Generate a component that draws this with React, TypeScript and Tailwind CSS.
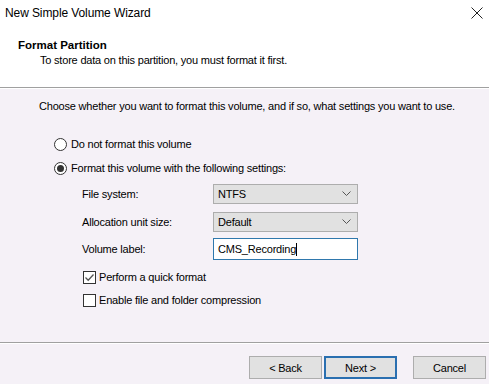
import React from 'react';

const font = { fontFamily: "'Liberation Sans', Arial, sans-serif" };

const Radio = ({ checked, label }: { checked?: boolean; label: string }) => (
  <div className="flex items-center h-[16px] pl-[54px] gap-[4px]">
    <span className="w-[13px] h-[13px] rounded-full border border-[#333] bg-white flex items-center justify-center shrink-0">
      {checked && <span className="w-[7px] h-[7px] rounded-full bg-[#333]" />}
    </span>
    <span>{label}</span>
  </div>
);

const Check = ({ checked, label }: { checked?: boolean; label: string }) => (
  <div className="flex items-center h-[16px] pl-[83px] gap-[3px]">
    <span className="w-[13px] h-[13px] border border-[#333] bg-white flex items-center justify-center shrink-0">
      {checked && (
        <svg width="11" height="11" viewBox="0 0 11 11">
          <path d="M1.5 5.5 L4.2 8.2 L9.5 2.5" fill="none" stroke="#555" strokeWidth="1.3" />
        </svg>
      )}
    </span>
    <span>{label}</span>
  </div>
);

const Select = ({ value }: { value: string }) => (
  <div className="w-[145px] h-[20px] bg-[#e1e1e1] border border-[#adadad] flex items-center justify-between pl-[4px] pr-[6px]">
    <span>{value}</span>
    <svg width="9" height="6" viewBox="0 0 9 6">
      <path d="M0.5 0.5 L4.5 4.5 L8.5 0.5" fill="none" stroke="#555" strokeWidth="1" />
    </svg>
  </div>
);

const Button = ({ label, primary }: { label: string; primary?: boolean }) => (
  <div
    className={`w-[73px] h-[23px] flex items-center justify-center bg-[#e1e1e1] ${
      primary ? 'border-2 border-[#2a6fb0]' : 'border border-[#adadad]'
    }`}
  >
    {label}
  </div>
);

export default function App() {
  return (
    <div
      className="w-[489px] h-[384px] bg-[#f5f1f7] text-[11px] tracking-[-0.2px] text-black flex flex-col leading-[14px] whitespace-nowrap"
      style={font}
    >
      {/* header */}
      <div className="bg-white h-[87px] flex flex-col">
        <div className="h-[26px] flex items-center justify-between pl-[5px] pr-[6px] text-[12px] tracking-[-0.1px]">
          <span>New Simple Volume Wizard</span>
          <svg width="12" height="12" viewBox="0 0 12 12">
            <path d="M0.5 0.5 L11.5 11.5 M11.5 0.5 L0.5 11.5" stroke="#222" strokeWidth="1" />
          </svg>
        </div>
        <div className="mt-[12px] pl-[18px] font-bold leading-[15px] text-[11.5px] tracking-[0px]">Format Partition</div>
        <div className="pl-[40px] leading-[15px]">To store data on this partition, you must format it first.</div>
      </div>
      <div className="h-[1px] bg-[#a0a0a0]" />
      <div className="h-[1px] bg-white" />

      {/* body */}
      <div className="pl-[39px] mt-[10px] h-[14px]">
        Choose whether you want to format this volume, and if so, what settings you want to use.
      </div>
      <div className="mt-[23px]">
        <Radio label="Do not format this volume" />
      </div>
      <div className="mt-[8px]">
        <Radio checked label="Format this volume with the following settings:" />
      </div>

      <div className="mt-[8px] flex items-center h-[20px] pl-[82px]">
        <span className="w-[131px]">File system:</span>
        <Select value="NTFS" />
      </div>
      <div className="mt-[8px] flex items-center h-[20px] pl-[82px]">
        <span className="w-[131px]">Allocation unit size:</span>
        <Select value="Default" />
      </div>
      <div className="mt-[6px] flex items-center h-[22px] pl-[82px]">
        <span className="w-[131px]">Volume label:</span>
        <div className="w-[145px] h-[22px] bg-white border border-[#2f78ad] flex items-center pl-[4px]">
          <span>CMS_Recording</span>
          <span className="w-[1px] h-[13px] bg-black" />
        </div>
      </div>

      <div className="mt-[9px]">
        <Check checked label="Perform a quick format" />
      </div>
      <div className="mt-[7px]">
        <Check label="Enable file and folder compression" />
      </div>

      <div className="flex-1" />

      {/* footer */}
      <div className="h-[1px] bg-[#a0a0a0]" />
      <div className="h-[1px] bg-white" />
      <div className="mt-[12px] mb-[5px] flex items-center pl-[249px] gap-[2px]">
        <Button label="< Back" />
        <Button label="Next >" primary />
        <div className="w-[12px]" />
        <Button label="Cancel" />
      </div>
    </div>
  );
}
